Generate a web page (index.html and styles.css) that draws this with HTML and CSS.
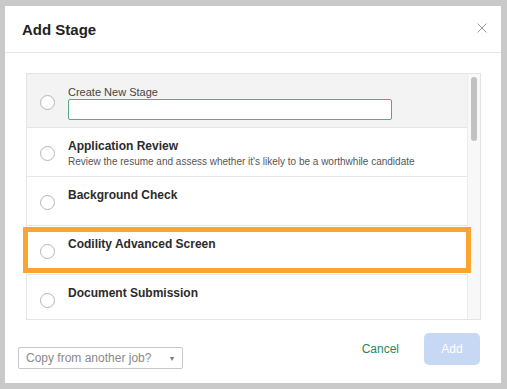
FILE: index.html
```html
<!DOCTYPE html>
<html lang="en">
<head>
    <meta charset="UTF-8">
    <meta name="viewport" content="width=device-width, initial-scale=1.0">
    <title>Add Stage</title>
    <link rel="stylesheet" href="styles.css">
</head>
<body>
    <div class="modal">
        <div class="modal-head">
            <h2>Add Stage</h2>
            <span class="close">
                <svg width="10" height="10" viewBox="0 0 10 10"><path d="M0.5 0.5L9.5 9.5M9.5 0.5L0.5 9.5" stroke="#9a9a9a" stroke-width="1" fill="none"/></svg>
            </span>
        </div>
        <div class="modal-body">
            <div class="list">
                <div class="rows">
                    <div class="row new">
                        <span class="radio"></span>
                        <div class="text">
                            <label>Create New Stage</label>
                            <input type="text">
                        </div>
                    </div>
                    <div class="row">
                        <span class="radio"></span>
                        <div class="text">
                            <div class="name">Application Review</div>
                            <div class="desc">Review the resume and assess whether it's likely to be a worthwhile candidate</div>
                        </div>
                    </div>
                    <div class="row">
                        <span class="radio"></span>
                        <div class="text">
                            <div class="name">Background Check</div>
                            <div class="desc"></div>
                        </div>
                    </div>
                    <div class="row">
                        <span class="radio"></span>
                        <div class="text">
                            <div class="name">Codility Advanced Screen</div>
                            <div class="desc"></div>
                        </div>
                    </div>
                    <div class="row">
                        <span class="radio"></span>
                        <div class="text">
                            <div class="name">Document Submission</div>
                            <div class="desc"></div>
                        </div>
                    </div>
                </div>
                <div class="track"><div class="thumb"></div></div>
            </div>
        </div>
        <div class="modal-foot">
            <div class="copy">
                <span>Copy from another job?</span>
                <span class="arrow">&#9662;</span>
            </div>
            <div class="actions">
                <a class="cancel">Cancel</a>
                <button class="add">Add</button>
            </div>
        </div>
        <div class="highlight"></div>
    </div>
</body>
</html>
```

FILE: styles.css
```css
body{
    margin: 0;
    padding: 0;
    background: #c9c9c9;
    font-family: "Liberation Sans", Arial, sans-serif;
    color: #333;
}
.modal{
    position: relative;
    width: 496px;
    height: 377px;
    margin: 6px 0 0 5px;
    background: #fff;
}
.modal-head{
    display: flex;
    align-items: center;
    justify-content: space-between;
    height: 46px;
    padding: 0 14px 0 17px;
    border-bottom: 1px solid #e6e6e6;
}
.modal-head h2{
    margin: 0;
    font-size: 15px;
    font-weight: bold;
    color: #222;
}
.close{
    display: flex;
    margin-top: -3px;
}
.modal-body{
    padding: 20px 20px 0 21px;
}
.list{
    display: flex;
    height: 245px;
    border: 1px solid #e4e4e4;
    overflow: hidden;
}
.rows{
    flex: 1;
}
.row{
    display: flex;
    align-items: center;
    height: 49px;
    box-sizing: border-box;
    padding: 3px 13px 0;
    border-bottom: 1px solid #e6e6e6;
}
.row.new{
    height: 54px;
    background: #f3f3f3;
    padding-top: 4px;
}
.radio{
    flex: none;
    width: 13px;
    height: 13px;
    border: 1px solid #b5b5b5;
    border-radius: 50%;
    background: #fff;
    margin-right: 13px;
}
.text label{
    display: block;
    font-size: 11px;
    line-height: 13px;
    color: #444;
}
.text input{
    display: block;
    width: 324px;
    height: 21px;
    box-sizing: border-box;
    margin: 0;
    border: 1px solid #57a884;
    border-radius: 2px;
    background: #fff;
}
.name{
    font-size: 12px;
    font-weight: bold;
    line-height: 16px;
    color: #2b2b2b;
}
.desc{
    font-size: 10px;
    line-height: 15px;
    min-height: 15px;
    color: #555;
}
.track{
    width: 12px;
    background: #f8f8f8;
    border-left: 1px solid #ececec;
    padding-top: 3px;
}
.thumb{
    width: 6px;
    height: 64px;
    margin-left: 3px;
    border-radius: 3px;
    background: #c1c1c1;
}
.modal-foot{
    display: flex;
    align-items: flex-start;
    justify-content: space-between;
    padding: 13px 21px 0 13px;
}
.copy{
    display: flex;
    align-items: center;
    justify-content: space-between;
    width: 165px;
    height: 22px;
    box-sizing: border-box;
    margin-top: 14px;
    padding: 0 8px 0 7px;
    border: 1px solid #c6c6c6;
    border-radius: 2px;
    font-size: 12px;
    color: #8a8a8a;
}
.copy .arrow{
    font-size: 8px;
    color: #777;
}
.actions{
    display: flex;
    align-items: center;
    gap: 25px;
}
.cancel{
    font-size: 12px;
    color: #1f8a5c;
}
.add{
    width: 56px;
    height: 32px;
    border: none;
    border-radius: 5px;
    background: #c6d8f3;
    color: #fff;
    font-family: "Liberation Sans", Arial, sans-serif;
    font-size: 12px;
}
.highlight{
    position: absolute;
    left: 18px;
    top: 221px;
    width: 448px;
    height: 46px;
    box-sizing: border-box;
    border: 5px solid #f9a530;
}
```
